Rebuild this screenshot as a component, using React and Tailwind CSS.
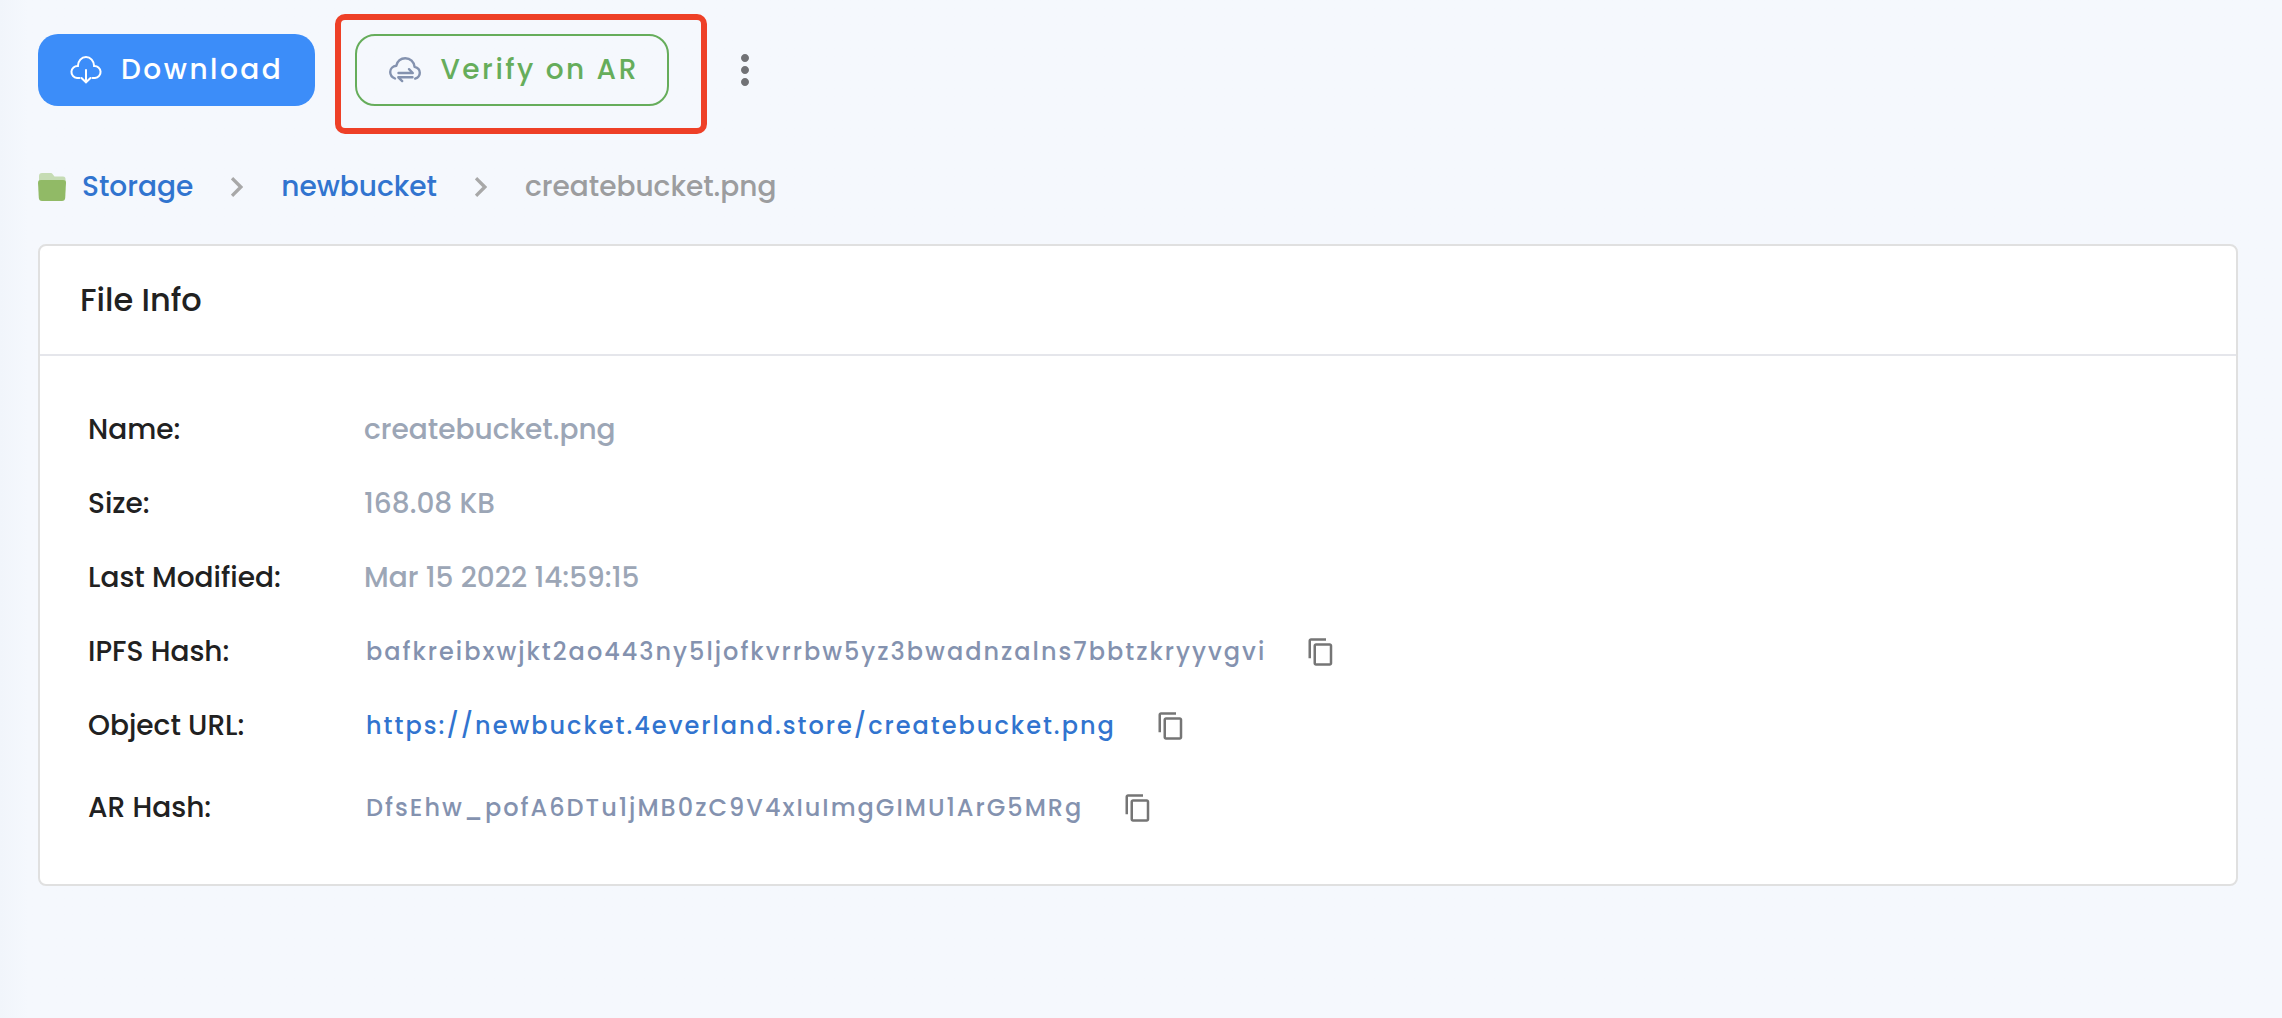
import { MdContentCopy, MdMoreVert } from 'react-icons/md';

const FILE_ROWS = [
  { label: 'Name:', value: 'createbucket.png' },
  { label: 'Size:', value: '168.08 KB' },
  { label: 'Last Modified:', value: 'Mar 15 2022 14:59:15' },
  { label: 'IPFS Hash:', value: 'bafkreibxwjkt2ao443ny5ljofkvrrbw5yz3bwadnzalns7bbtzkryyvgvi', type: 'hash' },
  { label: 'Object URL:', value: 'https://newbucket.4everland.store/createbucket.png', type: 'link' },
  { label: 'AR Hash:', value: 'DfsEhw_pofA6DTu1jMB0zC9V4xIuImgGIMU1ArG5MRg', type: 'hash' },
];

function CloudDownloadIcon() {
  return (
    <svg className="h-7 w-8 shrink-0" viewBox="0 0 32 28" fill="none" stroke="currentColor" strokeWidth="2" strokeLinecap="round" aria-hidden="true">
      <path d="M9.5 22H7A6 6 0 0 1 7.900 10C8 5 11.500 1 16 1s8 4 8.100 9A6 6 0 0 1 25 22h-2.500" />
      <path d="M16 14v12M11.500 22l4.500 4.300 4.500-4.300" />
    </svg>
  );
}

function CloudSyncIcon() {
  return (
    <svg className="h-7 w-8 shrink-0 text-[#8492af]" viewBox="0 0 32 28" fill="none" stroke="currentColor" strokeWidth="2.400" strokeLinecap="round" strokeLinejoin="round" aria-hidden="true">
      <path d="M6 22.500C3 21.200 1.200 18.800 1.200 16c0-3.300 2.600-5.800 6.100-6.200C8.200 5.200 11.800 2.200 16.300 2.200c5 0 8.700 3.600 9.300 8.600 3 .7 5.200 3 5.200 6 0 2.600-1.700 4.900-4.600 5.800" />
      <path d="M9.500 17h14.300L20 13.200M23.500 21.300H9.300l3.900 3.800" />
    </svg>
  );
}

function FolderIcon() {
  return (
    <svg className="size-7 shrink-0" viewBox="0 0 28 28" aria-hidden="true">
      <path d="M1 10V3a3 3 0 0 1 3-3h8.500c1 0 1.500.3 2 1l2 2.500h8.500a2.500 2.500 0 0 1 2.500 2.500V10z" fill="#c6dcb4" />
      <path d="M0 9.500C0 7.800 1 7 3 7h22c2 0 3 .8 3 2.500L27.200 25c-.2 2-1.200 3-3.200 3H4c-2 0-3-1-3.200-3z" fill="#91ba66" />
    </svg>
  );
}

function Chevron() {
  return (
    <svg className="h-5 w-3 shrink-0 text-[#a8a8a8]" viewBox="0 0 12 20" fill="none" stroke="currentColor" strokeWidth="3.300" aria-hidden="true">
      <path d="M1 1.200L9.800 10 1 18.800" />
    </svg>
  );
}

function FileValue({ value, type }) {
  if (!type) return <span className="text-[28px] text-[#9ca6b6]">{value}</span>;

  return (
    <span className="flex items-center gap-10 pl-0.5 text-2xl tracking-[2px]">
      {type === 'link'
        ? <a href={value} className="text-[#3174cf]">{value}</a>
        : <span className="text-[#8492af]">{value}</span>}
      <button type="button" aria-label="Copy" className="text-[#757575]">
        <MdContentCopy className="size-[30px]" />
      </button>
    </span>
  );
}

/**
 * FileDetail – actions, breadcrumb and info card of one stored file.
 */
export default function App() {
  return (
    <main className="min-h-screen bg-linear-to-r from-[#f1f5fb] to-[#f5f8fd] to-[28px] pt-[34px] pr-11 pl-[38px] font-['Poppins','Inter',sans-serif] font-medium">

      {/* Actions */}
      <div className="flex items-center gap-10">
        <button type="button" className="flex h-18 items-center gap-[19px] rounded-[20px] bg-[#3c8df9] px-8 text-[28px] tracking-[0.09em] text-white">
          <CloudDownloadIcon />
          Download
        </button>
        <div className="relative">
          <button type="button" className="flex h-18 items-center gap-[19px] rounded-[20px] border-2 border-[#66ad5b] pr-7 pl-8 text-[28px] tracking-[0.09em] text-[#66ad5b]">
            <CloudSyncIcon />
            Verify on AR
          </button>
          {/* highlight frame */}
          <span className="pointer-events-none absolute -top-5 -right-[38px] -bottom-7 -left-5 rounded-[10px] border-6 border-[#ee4027]" />
        </div>
        <button type="button" aria-label="More" className="ml-3 text-[#717276]">
          <MdMoreVert className="size-12" />
        </button>
      </div>

      {/* Breadcrumb */}
      <nav className="mt-15 flex h-[42px] items-center gap-[38px] text-[28px]">
        <a href="#storage" className="flex items-center gap-4 text-[#3174cf]">
          <FolderIcon />
          Storage
        </a>
        <Chevron />
        <a href="#newbucket" className="text-[#3174cf]">newbucket</a>
        <Chevron />
        <span className="text-[#9c9d9f]">createbucket.png</span>
      </nav>

      {/* File info */}
      <section className="mt-9 rounded-lg border-2 border-[#e0e0e0] bg-white">
        <h2 className="flex h-[110px] items-center border-b-2 border-[#e5e6eb] px-10 text-[32px] text-[#212121]">
          File Info
        </h2>
        <dl className="px-12 pt-[37px] pb-[31px]">
          {FILE_ROWS.map((row) => (
            <div key={row.label} className="flex h-[74px] items-center last:h-[90px]">
              <dt className="w-[276px] shrink-0 text-[28px] text-[#212121]">{row.label}</dt>
              <dd><FileValue value={row.value} type={row.type} /></dd>
            </div>
          ))}
        </dl>
      </section>
    </main>
  );
}
